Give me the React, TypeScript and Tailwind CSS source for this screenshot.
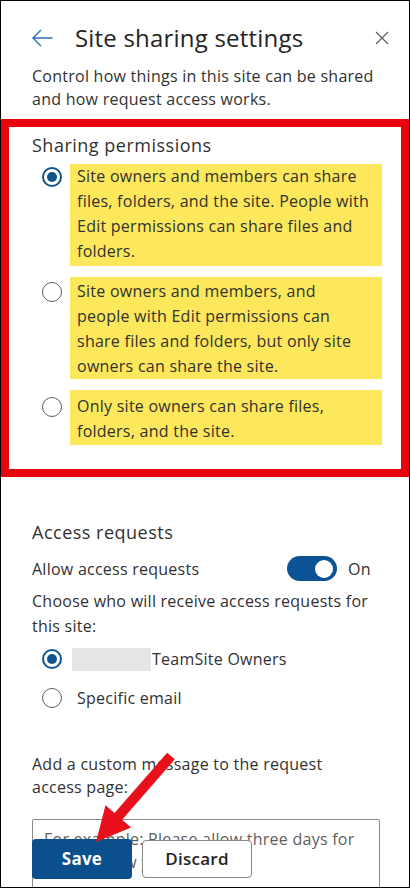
import React from "react";

function Radio({ checked }: { checked?: boolean }) {
  return checked ? (
    <span className="flex items-center justify-center w-[20px] h-[20px] rounded-full border-[2px] border-[#0f548c] bg-white shrink-0">
      <span className="w-[10px] h-[10px] rounded-full bg-[#0f548c]" />
    </span>
  ) : (
    <span className="block w-[20px] h-[20px] rounded-full border border-[#605e5c] bg-white shrink-0" />
  );
}

export default function App() {
  return (
    <div className="relative w-[410px] h-[888px] overflow-hidden bg-white border border-black font-['Open_Sans',sans-serif] text-[#323130] tracking-[0.25px]">
      {/* Header */}
      <div className="flex items-center h-[32px] mt-[21px] pl-[31px] pr-[20px]">
        <svg width="21" height="18" viewBox="0 0 21 18" fill="none" className="shrink-0">
          <path d="M1 9 H20.5 M9 1 L1 9 L9 17" stroke="#2d6db5" strokeWidth="1.4" strokeLinejoin="miter" />
        </svg>
        <div className="ml-[22px] text-[24px] leading-[32px] tracking-[0.2px] text-[#252423]">Site sharing settings</div>
        <svg width="14" height="14" viewBox="0 0 14 14" className="ml-auto shrink-0" fill="none">
          <path d="M1 1 L13 13 M13 1 L1 13" stroke="#605e5c" strokeWidth="1.2" />
        </svg>
      </div>

      {/* Description */}
      <div className="mt-[11px] pl-[31px] text-[16px] leading-[23px]">
        Control how things in this site can be shared
        <br />
        and how request access works.
      </div>

      {/* Sharing permissions (highlighted) */}
      <div className="mt-[8px] border-[8px] border-[#e8050d] pl-[23px] pt-[6px] pb-[24px]">
        <div className="text-[18px] leading-[24px] font-medium tracking-[0.5px]">Sharing permissions</div>
        <div className="mt-[7px] flex flex-col gap-[11px]">
          <div className="flex items-start">
            <div className="ml-[10px] h-[25px] flex items-center">
              <Radio checked />
            </div>
            <div className="ml-[8px] w-[312px] bg-[#fde85b] px-[7px] pt-0 pb-[2px] text-[16px] leading-[25px]">
              Site owners and members can share
              <br />
              files, folders, and the site. People with
              <br />
              Edit permissions can share files and
              <br />
              folders.
            </div>
          </div>
          <div className="flex items-start">
            <div className="ml-[10px] mt-[2px] h-[25px] flex items-center">
              <Radio />
            </div>
            <div className="ml-[8px] w-[312px] bg-[#fde85b] px-[7px] pt-[2px] pb-0 text-[16px] leading-[25px]">
              Site owners and members, and
              <br />
              people with Edit permissions can
              <br />
              share files and folders, but only site
              <br />
              owners can share the site.
            </div>
          </div>
          <div className="flex items-start">
            <div className="ml-[10px] mt-[4px] h-[25px] flex items-center">
              <Radio />
            </div>
            <div className="ml-[8px] w-[312px] bg-[#fde85b] px-[7px] pt-[4px] pb-px text-[16px] leading-[25px]">
              Only site owners can share files,
              <br />
              folders, and the site.
            </div>
          </div>
        </div>
      </div>

      {/* Access requests */}
      <div className="pl-[31px]">
        <div className="mt-[43px] text-[18px] leading-[24px] tracking-[0.5px]">Access requests</div>
        <div className="mt-[12px] flex items-center h-[25px]">
          <div className="w-[255px] text-[16px]">Allow access requests</div>
          <div className="w-[50px] h-[25px] rounded-full bg-[#0b5394] flex items-center justify-end pr-[4px]">
            <span className="w-[18px] h-[18px] rounded-full bg-white" />
          </div>
          <div className="ml-[11px] text-[16px]">On</div>
        </div>
        <div className="mt-[8px] text-[16px] leading-[25px]">
          Choose who will receive access requests for
          <br />
          this site:
        </div>
        <div className="mt-[8px] flex items-center h-[24px]">
          <span className="ml-[10px]">
            <Radio checked />
          </span>
          <span className="ml-[10px] w-[79px] h-[23px] bg-[#e6e6e6]" />
          <span className="ml-px text-[16px]">TeamSite Owners</span>
        </div>
        <div className="mt-[15px] flex items-center h-[24px]">
          <span className="ml-[10px]">
            <Radio />
          </span>
          <span className="ml-[15px] text-[16px]">Specific email</span>
        </div>
        <div className="mt-[43px] text-[16px] leading-[23px]">
          Add a custom message to the request
          <br />
          access page:
        </div>
        <div className="mt-[20px] w-[348px] h-[90px] border border-[#8a8886] rounded-[2px] px-[11px] pt-[8px] text-[16px] leading-[23px] text-[#605e5c]">
          For example: Please allow three days for
          <br />
          us to review your request.
        </div>
      </div>

      {/* Footer buttons overlay */}
      <div className="absolute left-[31px] top-[838px] flex items-start">
        <button className="w-[100px] h-[40px] rounded-[4px] bg-[#0b4f8c] text-white text-[17px] font-bold">
          Save
        </button>
        <button className="ml-[10px] mt-px w-[110px] h-[38px] rounded-[4px] border border-[#8a8886] bg-white text-[#252423] text-[17px] font-semibold">
          Discard
        </button>
      </div>

      {/* Red annotation arrow */}
      <svg
        className="absolute left-0 top-0 pointer-events-none"
        width="410"
        height="888"
        viewBox="0 0 410 888"
      >
        <polygon
          points="174.8,759.3 122.1,819.7 131.1,827.6 96,842 105.5,805.2 114.5,813.1 167.2,752.7"
          fill="#e8101a"
          transform="translate(-1,-1)"
        />
      </svg>
    </div>
  );
}
